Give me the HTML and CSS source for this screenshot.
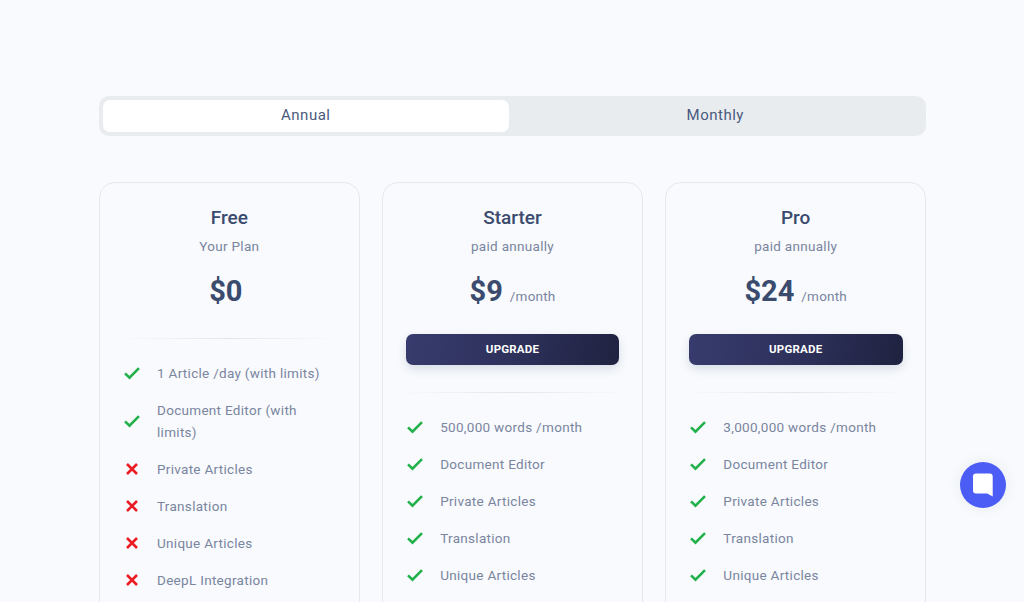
FILE: index.html
```html
<!DOCTYPE html>
<html lang="en">
<head>
    <meta charset="UTF-8">
    <meta name="viewport" content="width=device-width, initial-scale=1.0">
    <title>Pricing</title>
    <link rel="stylesheet" href="styles.css">
</head>
<body>
    <svg class="icon-defs" width="0" height="0" aria-hidden="true">
        <symbol id="check" viewBox="0 0 16 16">
            <path d="M1 8.400l4.500 4.300L15 3.200" fill="none" stroke="currentColor" stroke-width="2.600"/>
        </symbol>
        <symbol id="cross" viewBox="0 0 16 16">
            <path d="M3 3l10 10M13 3L3 13" fill="none" stroke="currentColor" stroke-width="2.600"/>
        </symbol>
    </svg>

    <div class="pricing">
        <div class="toggle">
            <div class="toggle-tab active">Annual</div>
            <div class="toggle-tab">Monthly</div>
        </div>

        <div class="plans">
            <div class="plan">
                <div class="plan-name">Free</div>
                <div class="plan-note">Your Plan</div>
                <div class="plan-price"><span class="amount">$0</span><span class="period"></span></div>
                <div class="divider"></div>
                <ul class="features">
                    <li><svg class="icon yes"><use href="#check"/></svg><span>1 Article /day (with limits)</span></li>
                    <li><svg class="icon yes"><use href="#check"/></svg><span>Document Editor (with limits)</span></li>
                    <li><svg class="icon no"><use href="#cross"/></svg><span>Private Articles</span></li>
                    <li><svg class="icon no"><use href="#cross"/></svg><span>Translation</span></li>
                    <li><svg class="icon no"><use href="#cross"/></svg><span>Unique Articles</span></li>
                    <li><svg class="icon no"><use href="#cross"/></svg><span>DeepL Integration</span></li>
                </ul>
            </div>

            <div class="plan">
                <div class="plan-name">Starter</div>
                <div class="plan-note">paid annually</div>
                <div class="plan-price"><span class="amount">$9</span><span class="period">/month</span></div>
                <button class="upgrade-btn">UPGRADE</button>
                <div class="divider"></div>
                <ul class="features">
                    <li><svg class="icon yes"><use href="#check"/></svg><span>500,000 words /month</span></li>
                    <li><svg class="icon yes"><use href="#check"/></svg><span>Document Editor</span></li>
                    <li><svg class="icon yes"><use href="#check"/></svg><span>Private Articles</span></li>
                    <li><svg class="icon yes"><use href="#check"/></svg><span>Translation</span></li>
                    <li><svg class="icon yes"><use href="#check"/></svg><span>Unique Articles</span></li>
                </ul>
            </div>

            <div class="plan">
                <div class="plan-name">Pro</div>
                <div class="plan-note">paid annually</div>
                <div class="plan-price"><span class="amount">$24</span><span class="period">/month</span></div>
                <button class="upgrade-btn">UPGRADE</button>
                <div class="divider"></div>
                <ul class="features">
                    <li><svg class="icon yes"><use href="#check"/></svg><span>3,000,000 words /month</span></li>
                    <li><svg class="icon yes"><use href="#check"/></svg><span>Document Editor</span></li>
                    <li><svg class="icon yes"><use href="#check"/></svg><span>Private Articles</span></li>
                    <li><svg class="icon yes"><use href="#check"/></svg><span>Translation</span></li>
                    <li><svg class="icon yes"><use href="#check"/></svg><span>Unique Articles</span></li>
                </ul>
            </div>
        </div>
    </div>

    <button class="chat-btn" aria-label="Chat">
        <svg width="24" height="24" viewBox="0 0 24 24">
            <path d="M5 .5h13.700a3 3 0 0 1 3 3v20l-5.500-3H5a3 3 0 0 1-3-3v-14a3 3 0 0 1 3-3z" fill="#fff"/>
        </svg>
    </button>
</body>
</html>
```

FILE: styles.css
```css
html, body {
    height: 100%;
}

body {
    margin: 0;
    overflow: hidden;
    background-color: #f8fafd;
    font-family: 'Roboto', sans-serif;
    color: #344767;
}

.icon-defs {
    position: absolute;
}

.pricing {
    width: 827px;
    margin-left: 99px;
    padding-top: 96px;
}

.toggle {
    display: flex;
    padding: 4px;
    background-color: #e9ecef;
    border-radius: 10px;
}

.toggle-tab {
    flex: 1 1 auto;
    height: 32px;
    line-height: 31px;
    text-align: center;
    font-size: 15px;
    letter-spacing: 0.5px;
    color: #4a5a7d;
}

.toggle-tab.active {
    background-color: #fff;
    border-radius: 7px;
}

.plans {
    display: flex;
    gap: 22.500px;
    margin-top: 46px;
}

.plan {
    flex: 1;
    box-sizing: border-box;
    padding: 23px 17px 40px;
    border: 1px solid #e4e9f0;
    border-radius: 16px;
    text-align: center;
}

.plan-name {
    font-size: 19px;
    font-weight: 500;
    line-height: 24px;
    color: #3a4b6e;
}

.plan-note {
    margin-top: 6px;
    font-size: 13.500px;
    line-height: 20px;
    letter-spacing: 0.3px;
    color: #7a859f;
}

.plan-price {
    margin-top: 12px;
    height: 46px;
    line-height: 47px;
}

.amount {
    font-size: 29px;
    font-weight: 700;
    color: #3a4b6e;
}

.period {
    margin-left: 7px;
    font-size: 13.500px;
    letter-spacing: 0.2px;
    color: #7a859f;
}

.upgrade-btn {
    display: block;
    width: calc(100% - 11px);
    height: 31px;
    margin: 20px auto 27px;
    padding: 0 0 2px;
    border: none;
    border-radius: 7px;
    background: linear-gradient(100deg, #373b6d 0%, #2e315b 50%, #1f2240 100%);
    box-shadow: 0 4px 10px rgba(52, 71, 103, 0.16);
    font-family: 'Roboto', sans-serif;
    font-size: 11.500px;
    font-weight: 700;
    letter-spacing: 0.2px;
    color: #fff;
    cursor: pointer;
}

.divider {
    height: 1px;
    margin-top: 24px;
    background: linear-gradient(90deg, rgba(200, 208, 220, 0), #e2e6ec 50%, rgba(200, 208, 220, 0));
}

.features {
    list-style: none;
    margin: 23px 0 0;
    padding: 0 7px;
    text-align: left;
}

.features li {
    display: flex;
    align-items: center;
    gap: 17px;
    margin-bottom: 15px;
    font-size: 13.500px;
    line-height: 22px;
    letter-spacing: 0.3px;
    color: #7a859f;
}

.icon {
    flex: none;
    width: 16px;
    height: 16px;
}

.icon.yes {
    color: #22b04a;
}

.icon.no {
    color: #ea1c24;
}

.chat-btn {
    position: fixed;
    left: 960px;
    top: 462px;
    display: flex;
    align-items: center;
    justify-content: center;
    width: 46px;
    height: 46px;
    padding: 0;
    border: none;
    border-radius: 50%;
    background-color: #4c5df5;
    box-shadow: 0 0 14px rgba(52, 71, 103, 0.08);
    cursor: pointer;
}
```
